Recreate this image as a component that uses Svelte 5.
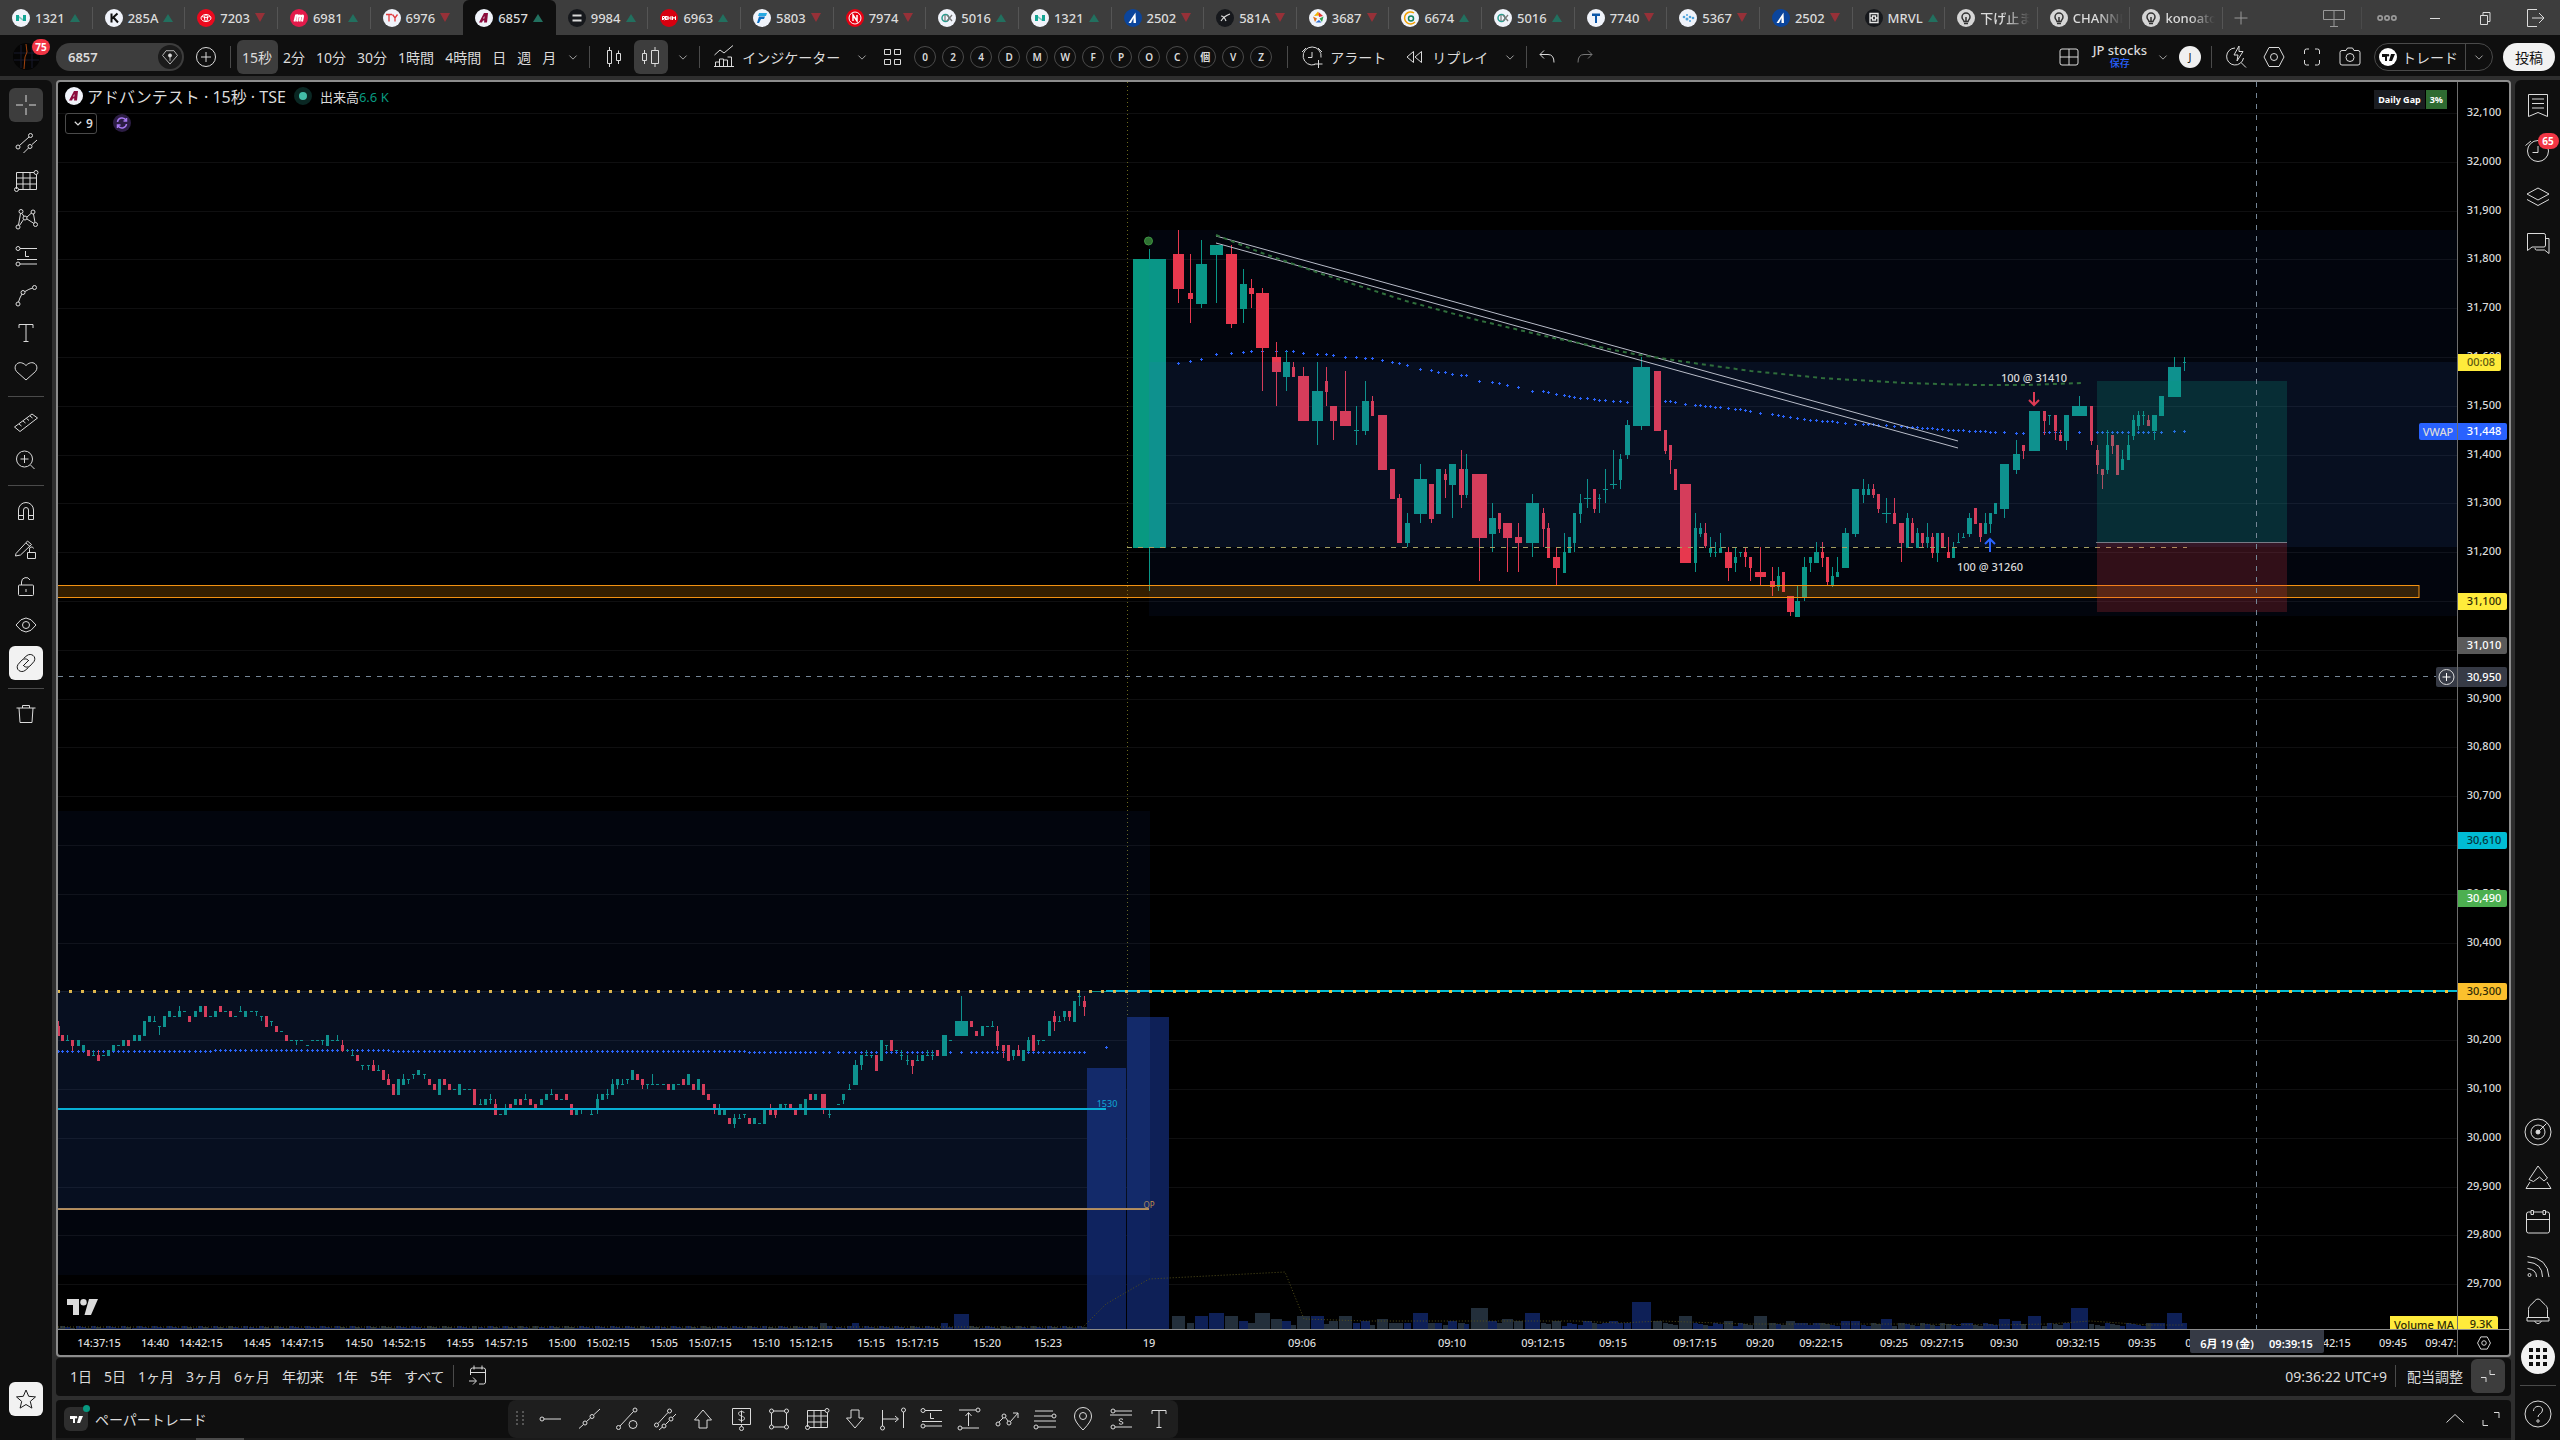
<script>
  const tabs = [
    ['1321', 'up', 'bars', '#f0f3fa', '#12a594'], ['285A', 'up', 'k', '#f0f3fa', '#111'], ['7203', 'down', 'toyota', '#eb0a1e', '#fff'],
    ['6981', 'up', 'm', '#e31b4b', '#fff'], ['6976', 'down', 'ty', '#f0f3fa', '#e03a3e'], ['6857', 'up', 'adv', '#f0f3fa', '#8b0a3c'],
    ['9984', 'up', 'eq', '#16181c', '#d8d8d8'], ['6963', 'up', 'rohm', '#d7000f', '#fff'], ['5803', 'down', 'f', '#f0f3fa', '#0b6fc2'],
    ['7974', 'down', 'n', '#e60012', '#fff'], ['5016', 'up', 'jx', '#f0f3fa', '#2a9d8f'], ['1321', 'up', 'bars', '#f0f3fa', '#12a594'],
    ['2502', 'down', 'asahi', '#0b459c', '#fff'], ['581A', 'down', 'x', '#16181c', '#ddd'], ['3687', 'down', 'star', '#f0f3fa', '#e33'],
    ['6674', 'up', 'gs', '#f0f3fa', '#12805c'], ['5016', 'up', 'jx', '#f0f3fa', '#2a9d8f'], ['7740', 'down', 't', '#f0f3fa', '#0b56a8'],
    ['5367', 'down', 'dots', '#f0f3fa', '#4fa3dc'], ['2502', 'down', 'asahi', '#0b459c', '#fff'], ['MRVL', 'up', 'mrvl', '#16181c', '#e6e6e6'],
    ['下げ止まり', '', 'idea', '#d6d6d6', '#333'], ['CHANNEL', '', 'idea', '#d6d6d6', '#333'], ['konoatos', '', 'idea', '#d6d6d6', '#333']
  ];

  const marks = {
    bars: '<path fill="C" d="M4 6h3v6H4zM11 6h3v6h-3z"/><path fill="#7fc9c0" d="m7 7 4 3v2L7 9z"/>',
    k: '<path fill="none" stroke="C" stroke-width="2" d="M6.500 4.500v9M12.500 4.500 7 9.500M8.500 8.500l4.500 5"/>',
    toyota: '<g fill="none" stroke="C"><ellipse cx="9" cy="9" rx="5" ry="3.500"/><ellipse cx="9" cy="9" rx="1.500" ry="3.500"/><path d="M5 7.500q4 2.500 8 0"/></g>',
    m: '<path fill="none" stroke="C" stroke-width="2" d="M4.500 12.500 6 6.500q2-1 2 1l-1 5M8 7.500q2.500-2 2.500 0l-1 5M10.500 7.500q3-2 2.500 0l-1 5"/>',
    ty: '<path fill="none" stroke="C" stroke-width="1.300" d="M3 5.500h6M6 5.500v7M9.500 5.500l2.500 3.500 2.500-3.500M12 9v3.500"/>',
    adv: '<path fill="C" d="M9 4h4l-1 9.500H9l.3-2H8l-1 2H4z"/><path fill="#f0f3fa" d="m9.500 7-.2 2.500H8z"/>',
    eq: '<path fill="C" d="M4.500 5.500h9v2h-9zM4.500 10.500h9v2h-9z"/>',
    rohm: '<g fill="none" stroke="C"><path d="M2.500 11V7.500h2v2h-2l2 1.500M8 7v4M11 7v4M8 9h3M12.500 11V7.500l1.500 2 1.500-2V11"/><rect x="5.500" y="7.500" width="1.500" height="3"/></g>',
    f: '<path fill="#27a9e1" d="M6 4h8l-1 3H5z"/><path fill="C" d="M6 7.500h6l-1 2.500H8l-2 4H4z"/>',
    n: '<circle cx="9" cy="9" r="6" fill="none" stroke="C"/><path fill="none" stroke="C" stroke-width="1.500" d="M7 12V6l4 6V6"/>',
    jx: '<circle cx="7.500" cy="9" r="3.500" fill="none" stroke="C" stroke-width="1.500"/><path stroke="#777" stroke-width="1.200" fill="none" d="m9 6 5 6M14 6l-5 6M7 6v6"/>',
    asahi: '<path fill="C" d="M11.500 3.500 12 14H9.500V9L7 14H4.500z"/>',
    x: '<path stroke="C" fill="none" stroke-width="1.200" d="M5 7q3 0 5 5M5 12q3-5 9-7"/>',
    star: '<path fill="#f3b300" d="M5 7 9 2.500l1.500 4z"/><path fill="#e03131" d="m9.500 3 4.500 4-4 1z"/><path fill="#2e9e4f" d="M14.500 7.500 13 13l-2.500-3.500z"/><path fill="#2f6fd0" d="M12.500 13.500H6.500l3.500-2.500z"/><path fill="#e0701b" d="M6 13 4 7.500l4 2z"/>',
    gs: '<path fill="none" stroke="#f0a000" stroke-width="1.500" d="M13 4a6 6 0 1 0 1 9"/><circle cx="10" cy="9.500" r="2.500" fill="none" stroke="C" stroke-width="1.500"/>',
    t: '<path fill="C" d="M5 4.500h8v2.500h-3v7H8V7H5z"/>',
    dots: '<g fill="C"><circle cx="5" cy="8" r="1.300"/><circle cx="8" cy="6" r="1"/><circle cx="8" cy="10" r="1.500"/><circle cx="11" cy="8" r="1.300"/><circle cx="11" cy="12" r="1"/><circle cx="14" cy="9" r="1.300"/></g>',
    mrvl: '<path fill="none" stroke="C" stroke-width="1.300" d="M5 4.500h8v9H5zM7.500 7h3v4h-3zM5 9h2M11 9h2"/>',
    idea: '<path fill="none" stroke="C" stroke-width="1.500" d="M7 12.500c0-1.500-2-2-2-4.500a4 4 0 0 1 8 0c0 2.500-2 3-2 4.500zM9 12V8M7 14.500h4"/>',
    tv: '<path fill="C" d="M3 6h5v7H6V9H3zM12 6h4l-3 7h-3zM9 6a1.300 1.300 0 1 1 0 2.600A1.300 1.300 0 0 1 9 6z"/>'
  };
  const mark = (n, c) => marks[n].replaceAll('"C"', `"${c}"`);

  const icons = {
    cross: '<path d="M14 4v7M14 17v7M4 14h7M17 14h7"/>',
    lines: '<circle cx="6" cy="18" r="2"/><circle cx="18.500" cy="6.500" r="2"/><path d="m7.500 16.500 9.500-8.500M11.500 24l5-5M20 15.500l5-4.500"/><circle cx="18" cy="17.500" r="2"/>',
    grid: '<path d="M4.500 22V5.500H22M24.500 8v14.500H6.500M4.500 11h20M4.500 17h20M11 5.500v17M18 5.500v17"/><circle cx="24" cy="5.500" r="2"/><circle cx="4.500" cy="22.500" r="2"/>',
    pattern: '<circle cx="6" cy="22" r="2"/><circle cx="9" cy="6.500" r="2"/><circle cx="13" cy="13" r="2"/><circle cx="21" cy="7" r="2"/><circle cx="23.500" cy="19.500" r="2"/><path d="m6.500 20 2-11.500M10 8.500l2 3M15 12l4.500-4M21.500 9l1.500 8.500M7.500 20.500l4-6M15 14l7 4.500"/>',
    position: '<circle cx="6" cy="5.500" r="2"/><circle cx="6" cy="21" r="2"/><path d="M8 5.500h17M8 21h17M5 16.500h20M13.500 8v5.500H17"/>',
    curve: '<circle cx="6" cy="23" r="2"/><circle cx="11" cy="11.500" r="2"/><circle cx="22.500" cy="6.500" r="2"/><path d="M6.500 21q1-4 3.500-8M13 10.500q4-2.500 7.500-3.500"/>',
    text: '<path d="M7 9V5.500h14V9M14 5.500v17M11.500 22.500h5"/>',
    heart: '<path d="M14 23 4.500 14.500C0 9 7 1.500 14 8.500c7-7 14 .5 9.500 6z"/>',
    ruler: '<path d="M2.500 19 20 6l5.500 4L8 23.500zM7 16l2.500 2M11 13l2.500 2M14.500 10.500l2.500 2M18 8l2.500 2"/>',
    zoom: '<circle cx="12.500" cy="13" r="8"/><path d="M12.500 9v8M8.500 13h8M18.500 19l4 4"/>',
    magnet: '<path d="M6.500 22.500V13a7.500 7.500 0 0 1 15 0v9.500h-5V13a2.500 2.500 0 0 0-5 0v9.500zM6.500 18.500h5M16.500 18.500h5"/>',
    pencil: '<path d="M4 18.500 15.500 6l4 3.500L8.500 20l-5 1zM14 8l4 3.500"/><path d="M15.500 17.500h8v6h-8zM17.500 17.500v-3a2 2 0 0 1 4-1"/>',
    lock: '<rect x="6.500" y="12" width="15" height="10.500" rx="1"/><path d="M9.500 12V9a4.500 4.500 0 0 1 8.500-2M14 16v3"/>',
    eye: '<path d="M4 14q10-14 20 0-10 14-20 0z"/><circle cx="14" cy="14" r="3.500"/>',
    link: '<path d="M11.500 9.500 15 6.500c4-3 10 1 7 6l-4 4.500c-2 1.500-4.500 1.500-6 0M16.500 18.500 13 21.500c-4 3-10-1-7-6l4-4.500c2-1.500 4.500-1.500 6 0M11 17l6-6"/>',
    trash: '<path d="M4.500 8h19M7 8l1 14.500h12L21 8M10.500 8V5.500h7V8"/>',
    star: '<path d="m14 5 2.700 6.300 6.800.6-5.200 4.500 1.600 6.700L14 19.500l-5.900 3.600 1.600-6.700-5.200-4.500 6.800-.6z"/>',
    plusc: '<circle cx="14" cy="14" r="9.500"/><path d="M14 9v10M9 14h10"/>',
    candle: '<path d="M8.500 7.500h4v13h-4zM10.500 4v3.500M10.500 20.500V24M17.500 10.500h4v7h-4zM19.500 7.500v3M19.500 17.500v3.500"/>',
    candle2: '<path d="M5.500 10.500h4v7h-4zM7.500 7v3.500M7.500 17.500V21M14.500 7.500h7v13h-7zM18 4v3.500M18 20.500V24"/>',
    ind: '<path d="M4 23.500h20M5.500 23v-4h4v4M9.500 19v-3h4v7M13.500 17h4v6M17.500 14h4v9M4.500 12 10 7l4 3 9-7.500"/>',
    four: '<path d="M6.500 6.500h6v5h-6zM16.500 6.500h6v5h-6zM6.500 16.500h6v5h-6zM16.500 16.500h6v5h-6z"/>',
    alarm: '<path d="M17 21.500a9 9 0 1 1 6-7M14 9v5.500h-4M4 9l4-4M20 5l4 4M20.500 17v8M16.500 21h8"/>',
    rew: '<path d="M13.500 8.500v11L7 14zM21.500 8.500v11L15 14z"/>',
    undo: '<path d="M11 7.500 7 11.500l4 4M7 11.500h8q6 0 6 8"/>',
    redo: '<path d="m17 7.500 4 4-4 4M21 11.500h-8q-6 0-6 8"/>',
    layout: '<rect x="5" y="6" width="18" height="16" rx="2"/><path d="M14 6v16M5 14h9"/><path d="M14 14h9"/>',
    flash: '<path d="M13 5a8.500 8.500 0 1 0 8.500 10M19 19.500l5 5M17 3l-5 9h4l-1 6 6-9.500h-4z"/>',
    hex: '<path d="M9 4.500h10l5 9.500-5 9.500H9L4 14z"/><circle cx="14" cy="14" r="3.500"/>',
    full: '<path d="M6.500 11V8q0-2 2-2H11M17 6h2.500q2 0 2 2v3M21.500 17v3q0 2-2 2H17M11 22H8.500q-2 0-2-2v-3"/>',
    camera: '<path d="M10 7.500 11.500 5h5L18 7.500h4q2 0 2 2V20q0 2-2 2H6q-2 0-2-2V9.500q0-2 2-2z"/><circle cx="14" cy="14.500" r="4"/>',
    present: '<path d="M3.500 6.500h21v9h-21zM14 6.500v16M10 22.500h8"/>',
    exit: '<path d="M16 5.500H6.500v17H16M18 9l5 5-5 5M11 14h12"/>',
    min: '<path d="M9 14.500h10"/>',
    restore: '<path d="M9.500 11.500h7v9h-7zM12 11.500v-3h7v9h-2.500"/>',
    dots3: '<circle cx="6" cy="14" r="2.500"/><circle cx="14" cy="14" r="2.500"/><circle cx="22" cy="14" r="2.500"/>',
    plus: '<path d="M14 7.500v13M7.500 14h13"/>',
    list: '<path d="M4.500 3.500h19v22l-9.500-4-9.500 4zM8 8h12M8 12.500h12M8 17h12"/>',
    clock: '<circle cx="14" cy="14" r="10.500"/><path d="M14 9v6.500H8.500M1.500 8.500 7 4"/>',
    layers: '<path d="m14 5 11 6-11 6-11-6zM3 16.500l11 6 11-6"/>',
    chat: '<path d="M3.500 4.500H20q1.500 0 1.500 2V16q0 2-1.500 2H8l-4.500 3.500zM21.500 9.500H25v15L20.500 21h-8q-1.500 0-1.500-2"/>',
    radar: '<circle cx="14" cy="14" r="13"/><circle cx="14" cy="14" r="7"/><circle cx="14" cy="14" r="2" fill="currentColor"/><path d="m14 14 8.500-8.500"/>',
    peak: '<path d="M5 16.500 14 3l9.500 12-3.500 3-4.500-4-6 4.500zM6 19l-4 6.500h25L23 19"/>',
    cal: '<rect x="2.500" y="4" width="23" height="21" rx="2"/><path d="M2.500 11.500h23"/><path fill="#0f0f0f" d="M7 2.500h2.500v4H7zM19 2.500h2.500v4H19z"/>',
    rss: '<circle cx="5.500" cy="22" r="1.500"/><path d="M3.500 15.500q9 1 9 8.500M3.500 9q15 1 15 15M3.500 3.500Q24 5 25 24"/>',
    bell: '<path d="M4.500 19.500v-8C4.500 7 9 6 10.500 3q3.500-4 7 0C19 6 23.500 7 23.500 11.500v8M3 19.500h22v3.500H3zM10.500 23q3.500 5.500 7 0"/>',
    help: '<circle cx="14" cy="14" r="13"/><path d="M9.500 11c0-6 9-6 9-1 0 4-4.500 3.500-4.500 7"/><circle cx="14" cy="21" r="1.200"/>',
    goto: '<path d="M6.500 13V8q0-2 2-2h11q2 0 2 2v12q0 2-2 2H15M6.500 10.500h15M10 3.500v4M18 3.500v4M5 19h7M9 15.500l3.500 3.500L9 22.500"/>',
    shrink: '<path d="M16 8v4.500h5M12 20v-4.500H7"/>',
    expand: '<path d="M17 7.500h5V13M11 20.500H6V15"/>',
    hray: '<circle cx="5" cy="14" r="2"/><path d="M7 14h17"/>',
    trend: '<circle cx="10" cy="18" r="2"/><circle cx="17" cy="11.500" r="2"/><path d="m4 23.500 4.500-4M11.500 16.500l4-3.500M18.500 10 25 4"/>',
    angle: '<circle cx="5.500" cy="22.500" r="2"/><circle cx="22" cy="5" r="2"/><circle cx="20" cy="19.500" r="4"/><path d="M7 21 20.500 6.500"/>',
    parallel: '<circle cx="5.500" cy="20" r="2"/><circle cx="18.500" cy="6" r="2"/><circle cx="13" cy="21" r="2"/><circle cx="20" cy="14" r="2"/><path d="M7 18.500 17 7.500M14.500 19.500l4-4M8 25l3.500-3M21.500 12.500 25 9"/>',
    up: '<path d="m14 5 8.500 10H18v8h-8v-8H5.500z"/>',
    down: '<path d="m14 23 8.500-10H18V5h-8v8H5.500z"/>',
    note: '<path d="M5.500 3.500h18v16h-18zM14.500 19.500v2M17.500 8c-1-2-6-2-6 .5 0 3 6 2 6 5 0 2.500-5 2.500-6 .5M14.500 5.500v12"/><circle cx="14.500" cy="23.500" r="2"/>',
    rect: '<path d="M6.500 8v12M21.500 8v12M8 6h12M8 22h12"/><circle cx="6.500" cy="6" r="2"/><circle cx="21.500" cy="6" r="2"/><circle cx="6.500" cy="22" r="2"/><circle cx="21.500" cy="22" r="2"/>',
    hrange: '<path d="M3.500 5v16M24.500 7v16M3.500 14H19M16 11l3.500 3-3.500 3"/><circle cx="3.500" cy="23" r="2"/><circle cx="24.500" cy="5" r="2"/>',
    vrange: '<path d="M4 5h17M7 23h17M13.500 21V8M10.500 11l3-3.500 3 3.500"/><circle cx="23" cy="5" r="2"/><circle cx="5" cy="23" r="2"/>',
    zig: '<circle cx="5" cy="19" r="2"/><circle cx="11" cy="11" r="2"/><circle cx="16" cy="18" r="2"/><path d="m6 17 4-4M12.500 12.500 15 16M17.500 16.500 25 8M20 8h5v5"/>',
    multi: '<path d="M4 6h18M3 11h18M3 16h22M7 22h18"/><circle cx="23" cy="11" r="2"/><circle cx="5" cy="22" r="2"/>',
    pin: '<path d="M14 25Q5 16 5.500 11a8.500 8.500 0 0 1 17 0Q23 16 14 25z"/><circle cx="14" cy="11" r="3.500"/>',
    short: '<circle cx="6" cy="6" r="2"/><circle cx="6" cy="22" r="2"/><path d="M8 6h17M8 22h17M3 10h22M16 14.500c-1-1-4-1-4 .5 0 2 4 1 4 3 0 1.500-3 1.500-4 .5"/>',
    chev: '<path d="m9 12 5 5 5-5"/>',
    chevup: '<path d="m5.500 17.500 8.500-8 8.500 8"/>',
    badge: '<path d="M9 6h10l4.500 6L14 23 4.500 12z"/><circle cx="14" cy="12" r="2" fill="currentColor"/><path d="M14 14v5"/>',
    grip: '<g fill="currentColor" stroke="none"><path d="M10 6h2v2h-2zM16 6h2v2h-2zM10 10h2v2h-2zM16 10h2v2h-2zM10 14h2v2h-2zM16 14h2v2h-2zM10 18h2v2h-2zM16 18h2v2h-2z"/></g>'
  };

  const intervals = ['15秒', '2分', '10分', '30分', '1時間', '4時間', '日', '週', '月'];
  const scripts = ['0', '2', '4', 'D', 'M', 'W', 'F', 'P', 'O', 'C', '個', 'V', 'Z'];
  const left = ['cross', 'lines', 'grid', 'pattern', 'position', 'curve', 'text', 'heart', '', 'ruler', 'zoom', '', 'magnet', 'pencil', 'lock', 'eye', 'link', '', 'trash'];
  const ranges = ['1日', '5日', '1ヶ月', '3ヶ月', '6ヶ月', '年初来', '1年', '5年', 'すべて'];
  const drawTools = ['grip', 'hray', 'trend', 'angle', 'parallel', 'up', 'note', 'rect', 'grid', 'down', 'hrange', 'position', 'vrange', 'zig', 'multi', 'pin', 'short', 'text'];

  // Left edge, width, body top, body bottom, high, low, direction, VWAP
  const morning = `1133 33 259 548 249 591 g 0,1173 11 254 289 230 303 r 363,1188 5 293 299 254 323 r 361,1196 11 264 304 240 308 g 359,1210 13 245 255 245 303 g 354,1226 11 254 324 245 328 r 353,1240 7 284 309 269 323 g 352,1249 5 288 294 279 308 r 351,1256 13 293 348 288 391 r 351,1272 9 357 372 342 406 r 351,1283 7 362 377 351 391 g 351,1292 3 367 377 362 377 r 351,1298 11 376 421 367 421 r 353,1312 11 391 421 362 445 g 354,1325 3 381 392 367 406 r 354,1330 7 406 421 406 440 r 355,1340 11 411 426 371 426 r 357,1354 5 430 431 406 445 g 357,1362 7 401 431 381 435 g 358,1371 3 401 416 396 416 r 358,1378 9 415 470 415 470 r 360,1390 5 469 499 469 499 r 362,1397 5 498 543 494 543 r 363,1405 5 523 543 513 547 g 365,1414 13 479 514 464 523 g 369,1429 5 484 519 484 523 r 370,1436 5 469 514 469 514 g 372,1444 3 474 480 469 498 r 372,1449 7 464 485 464 518 g 374,1459 5 469 495 450 508 r 375,1465 3 469 495 454 498 g 375,1472 15 474 538 474 581 r 381,1489 7 518 534 503 552 g 382,1498 3 513 529 513 533 r 383,1503 9 523 538 523 572 r 385,1515 7 537 543 523 572 r 387,1526 13 503 543 494 557 g 391,1542 3 513 529 508 547 r 391,1547 3 528 558 523 558 r 392,1553 7 557 568 547 585 r 394,1563 3 552 573 533 573 g 395,1568 3 537 553 537 553 g 396,1573 3 513 543 513 552 g 397,1579 3 503 514 494 523 g 398,1584 7 498 499 479 508 g 398,1593 3 489 509 489 513 r 399,1598 3 498 499 494 513 g 400,1603 5 489 490 469 503 g 400,1610 7 484 485 450 489 g 401,1619 3 459 480 454 489 g 401,1625 5 425 455 420 459 g 402,1633 17 367 426 357 430 g 402,1654 7 371 431 371 431 r 402,1664 3 430 451 430 454 r 401,1669 3 445 460 445 474 r 401,1674 3 469 490 469 490 r 402,1680 11 484 563 484 563 r 404,1694 3 528 563 513 572 g 405,1699 3 528 534 523 537 g 405,1704 3 533 546 523 548 r 406,1709 3 548 553 537 557 g 406,1714 3 552 553 542 557 g 407,1719 3 548 553 533 553 g 407,1725 7 552 568 547 581 r 408,1734 3 557 563 547 572 g 409,1739 3 552 553 552 557 g 409,1744 3 552 557 547 567 r 410,1749 3 557 568 557 581 r 411,1755 11 572 577 547 585 r 413,1770 5 581 587 567 596 r 414,1777 3 576 587 567 591 g 415,1782 3 572 592 572 592 r 416,1787 7 596 612 596 616 r 417,1795 5 601 617 585 617 g 418,1802 5 567 598 557 601 g 419,1809 3 557 563 557 572 g 420,1814 5 552 563 542 563 g 420,1821 3 552 558 542 567 r 421,1826 3 557 582 557 585 r 421,1831 3 576 586 567 587 g 421,1836 3 572 577 557 577 g 422,1842 7 533 568 528 568 g 423,1852 7 489 534 489 537 g 424,1862 3 489 495 479 503 g 424,1867 3 489 495 484 495 g 424,1872 3 489 495 484 498 r 424,1877 3 494 509 494 513 r 425,1882 9 513 514 498 523 g 425,1893 3 513 524 498 524 r 426,1899 5 523 543 523 562 r 426,1906 3 518 548 513 548 g 427,1911 3 523 543 518 543 r 427,1916 3 533 548 528 548 g 427,1921 3 533 543 533 548 r 428,1926 3 537 543 523 548 g 428,1931 3 537 553 533 558 r 428,1936 3 533 553 533 562 g 429,1941 3 533 548 533 548 r 429,1947 3 552 558 537 558 r 430,1952 3 547 558 542 558 g 430,1957 3 542 543 533 543 g 430,1962 3 537 538 533 538 g 430,1967 5 518 534 513 537 g 431,1974 3 508 524 508 524 r 431,1979 3 523 537 523 542 r 431,1984 3 523 534 513 534 g 431,1989 3 513 524 513 533 g 432,1994 3 503 514 503 514 g 432,2000 9 464 509 464 518 g 432,2013 7 454 470 440 474 g 433,2022 3 445 451 445 459 r 433,2029 11 411 451 411 451 g 433,2043 3 411 421 411 435 r 432,2048 3 415 416 415 425 g 432,2054 3 415 431 415 440 r 432,2059 3 435 441 430 441 r 432,2064 5 415 441 415 450 g 432,2072 15 406 416 396 416 g 432,2090 3 406 441 406 445 r 0,2096 3 450 465 445 474 r 432,2101 3 469 475 469 489 r 432,2106 3 445 470 430 474 g 432,2111 3 435 446 435 454 r 432,2116 3 445 475 445 475 r 432,2121 3 459 470 450 470 g 432,2127 3 445 460 435 460 g 432,2132 3 420 436 415 440 g 432,2137 3 415 426 411 430 g 432,2142 3 415 416 411 425 g 432,2147 3 420 426 415 426 r 432,2152 5 415 431 415 440 g 432,2159 5 396 416 396 416 g 432,2168 13 367 397 357 397 g 431,2183 3 362 363 357 371 g 431`;

  // Centre, body top, body bottom, high, low, direction, width if not 3
  const previous = `58 1026 1036 1021 1036 r,62 1035 1041 1035 1041 r,67 1040 1041 1035 1041 g,72 1040 1046 1040 1051 r,78 1040 1046 1040 1046 g,83 1045 1051 1045 1051 g,88 1050 1056 1050 1056 r,93 1055 1056 1050 1056 g,98 1055 1061 1050 1061 r,103 1055 1056 1055 1056 g,108 1050 1056 1050 1056 g,113 1045 1051 1045 1051 g,118 1045 1046 1045 1046 g,123 1040 1046 1040 1046 g,128 1040 1046 1040 1046 r,134 1035 1041 1035 1041 g,139 1035 1041 1035 1041 g,144 1021 1036 1021 1036 g,149 1016 1022 1016 1022 g,154 1021 1022 1016 1022 g,159 1026 1027 1026 1035 g,164 1016 1027 1016 1027 g,169 1011 1017 1011 1017 g,174 1016 1017 1016 1017 g,179 1011 1017 1006 1017 g,184 1011 1012 1011 1012 g,189 1016 1022 1016 1022 r,195 1011 1017 1011 1017 g,200 1006 1012 1006 1012 g,205 1006 1017 1006 1017 r,210 1016 1017 1016 1017 g,215 1011 1017 1011 1017 g,220 1006 1012 1006 1012 r,225 1011 1012 1011 1012 g,230 1011 1017 1011 1017 r,235 1016 1017 1016 1017 g,240 1011 1012 1006 1012 g,245 1011 1017 1011 1017 g,251 1011 1012 1011 1012 g,256 1011 1012 1011 1016 g,261 1016 1017 1016 1021 g,266 1016 1027 1016 1027 r,271 1021 1022 1021 1026 g,276 1026 1032 1026 1032 r,281 1031 1032 1031 1032 g,286 1035 1041 1035 1041 r,291 1040 1041 1040 1041 g,296 1040 1041 1040 1045 g,301 1040 1041 1040 1041 g,307 1045 1046 1045 1046 g,312 1040 1041 1040 1041 g,317 1040 1041 1040 1041 g,322 1040 1041 1040 1045 g,327 1035 1046 1035 1046 g,332 1040 1041 1040 1041 g,337 1040 1041 1035 1041 g,342 1045 1051 1040 1052 r,347 1050 1051 1050 1051 g,352 1055 1056 1050 1056 g,357 1055 1061 1055 1061 r,362 1065 1066 1065 1070 g,368 1065 1066 1065 1070 g,373 1065 1071 1060 1071 r,378 1070 1071 1065 1071 g,383 1070 1080 1070 1080 r,388 1079 1085 1074 1085 r,393 1084 1095 1084 1095 r,398 1079 1095 1079 1095 g,403 1079 1085 1074 1085 g,408 1079 1080 1079 1084 g,413 1074 1075 1074 1079 g,418 1070 1075 1070 1075 g,424 1074 1075 1074 1079 g,429 1079 1085 1079 1085 r,434 1084 1090 1084 1090 r,439 1079 1095 1079 1095 g,444 1079 1085 1079 1085 r,449 1084 1090 1084 1090 r,454 1089 1090 1089 1090 g,459 1084 1095 1084 1095 g,464 1089 1090 1089 1090 g,469 1089 1090 1089 1090 g,474 1089 1105 1089 1105 r,480 1104 1105 1099 1105 g,485 1099 1105 1099 1105 g,490 1099 1100 1094 1104 g,495 1104 1115 1099 1115 r,500 1114 1115 1114 1115 g,505 1109 1115 1104 1115 g,510 1104 1110 1104 1110 r,515 1099 1105 1099 1105 g,520 1099 1105 1099 1105 r,525 1099 1100 1094 1100 g,530 1099 1105 1099 1105 r,535 1104 1110 1104 1110 r,541 1099 1105 1099 1105 g,546 1094 1100 1094 1100 g,551 1094 1095 1089 1095 g,556 1094 1100 1094 1100 r,561 1099 1100 1099 1100 g,566 1094 1100 1094 1100 r,571 1104 1115 1104 1115 r,576 1109 1115 1109 1115 g,581 1109 1110 1109 1114 g,586 1109 1110 1109 1110 g,591 1114 1115 1109 1115 g,597 1099 1110 1094 1114 g,602 1094 1100 1094 1100 g,607 1094 1095 1089 1099 g,612 1084 1095 1079 1095 g,617 1079 1085 1079 1089 g,622 1084 1085 1079 1085 g,627 1079 1080 1079 1084 g,632 1070 1080 1070 1080 g,637 1074 1080 1074 1080 r,642 1079 1085 1079 1089 r,647 1084 1085 1084 1089 g,652 1084 1085 1074 1085 g,657 1084 1085 1084 1085 g,663 1084 1085 1084 1085 g,668 1084 1090 1084 1090 r,673 1084 1090 1084 1090 g,678 1084 1085 1084 1085 g,683 1079 1085 1079 1085 r,688 1074 1085 1074 1085 g,693 1084 1090 1084 1090 r,698 1079 1090 1079 1090 g,703 1084 1095 1084 1095 r,708 1094 1100 1094 1100 r,714 1104 1110 1104 1114 r,719 1109 1115 1104 1115 g,724 1109 1115 1109 1115 g,729 1118 1124 1118 1124 r,734 1118 1124 1114 1128 g,739 1118 1119 1114 1119 g,744 1114 1115 1114 1118 g,749 1118 1124 1118 1124 r,754 1118 1124 1118 1124 g,759 1123 1124 1123 1124 g,764 1109 1124 1109 1124 g,770 1109 1115 1104 1115 r,775 1109 1115 1109 1118 r,780 1104 1110 1104 1110 g,785 1104 1105 1104 1109 g,790 1104 1110 1104 1110 r,795 1109 1115 1109 1115 r,800 1104 1110 1104 1110 g,805 1099 1115 1099 1115 g,810 1094 1100 1094 1100 r,815 1094 1100 1094 1100 g,823 1094 1110 1094 1114 r 5,829 1114 1115 1110 1118 g,838 1104 1105 1104 1105 g,843 1094 1100 1094 1104 g,849 1089 1090 1084 1090 g,855 1065 1085 1060 1085 g 5,861 1055 1065 1055 1070 g,866 1055 1056 1050 1056 g,871 1055 1056 1055 1058 g,876 1055 1071 1055 1071 r,881 1040 1061 1040 1061 g,886 1045 1046 1045 1050 g,891 1040 1051 1040 1051 r,896 1050 1051 1050 1051 g,901 1055 1056 1050 1060 g,907 1060 1061 1055 1065 g,912 1060 1066 1060 1074 r,917 1060 1061 1055 1061 g,922 1055 1061 1055 1061 g,927 1055 1056 1050 1056 g,932 1055 1056 1050 1060 g,937 1050 1056 1050 1056 r,944 1035 1056 1035 1056 g 5,950 1040 1041 1040 1041 g,961 1021 1036 996 1036 g 13,971 1021 1027 1021 1027 r,976 1031 1036 1031 1036 r,982 1026 1036 1026 1036 g,987 1026 1027 1026 1027 g,992 1026 1027 1021 1027 g,997 1031 1046 1026 1050 r,1003 1045 1051 1045 1058 r,1008 1045 1061 1045 1061 r,1013 1050 1056 1050 1060 g,1018 1050 1056 1045 1056 r,1023 1050 1061 1050 1061 g,1028 1040 1051 1037 1051 g,1033 1035 1051 1035 1051 r,1038 1040 1041 1040 1045 g,1043 1040 1041 1040 1041 g,1049 1021 1036 1021 1036 g,1054 1016 1022 1011 1031 r,1059 1021 1022 1016 1022 g,1064 1011 1017 1011 1021 g,1069 1011 1017 1011 1021 r,1074 1001 1022 1001 1022 g,1079 996 997 991 1006 g,1084 1001 1007 996 1016 r`;

  const volByWidth = { 5: 6, 7: 8, 9: 10, 11: 13, 13: 16, 15: 21, 17: 27 };
  const oldVwap = (x) => (x < 215 ? 1051 : x < 391 ? 1050 : x < 748 ? 1051 : 1052);
  const candles = [
    ...morning.split(',').map((s, i) => {
      const p = s.split(' ');
      const [x, w, top, bot, hi, lo] = p.map(Number);
      return { x, w, top, bot, hi, lo, up: p[6] === 'g', vwap: +p[7], vol: volByWidth[w] ?? 3 + ((i * 7) % 4) };
    }),
    ...previous.split(',').map((s, i) => {
      const p = s.split(' ');
      const [c, top, bot, hi, lo] = p.map(Number);
      const w = +(p[6] ?? 3);
      return { x: c - (w - 1) / 2, w, top, bot, hi, lo, up: p[5] === 'g', vwap: oldVwap(c), vol: w === 13 ? 15 : w === 5 ? 6 : 1 + ((i * 5) % 3) };
    })
  ];
  const mid = (c) => c.x + Math.floor(c.w / 2);

  const yOf = (p) => Math.round(113 + (32100 - p) * 0.488);
  const prices = Array.from({ length: 25 }, (_, i) => 32100 - i * 100);
  const fmt = (p) => p.toLocaleString('en-US');
  const tags = [
    { y: 354, h: 17, w: 43, t: '00:08', bg: '#ffeb3b', fg: '#5c5610' },
    { y: 423, h: 17, w: 49, t: '31,448', bg: '#2962ff', fg: '#fff' },
    { y: 593, h: 17, w: 49, t: '31,100', bg: '#ffeb3b', fg: '#2e2a05' },
    { y: 637, h: 17, w: 49, t: '31,010', bg: '#5a5a5a', fg: '#fff' },
    { y: 667, h: 20, w: 49, t: '30,950', bg: '#363a45', fg: '#fff' },
    { y: 832, h: 17, w: 49, t: '30,610', bg: '#00bcd4', fg: '#05343a' },
    { y: 890, h: 17, w: 49, t: '30,490', bg: '#4caf50', fg: '#fff' },
    { y: 983, h: 17, w: 49, t: '30,300', bg: '#fbc02d', fg: '#2e2a05' },
    { y: 1316, h: 17, w: 40, t: '9.3K', bg: '#ffeb3b', fg: '#2e2a05' }
  ];
  const times = [[99, '14:37:15'], [155, '14:40'], [201, '14:42:15'], [257, '14:45'], [302, '14:47:15'], [359, '14:50'], [404, '14:52:15'], [460, '14:55'], [506, '14:57:15'], [562, '15:00'], [608, '15:02:15'], [664, '15:05'], [710, '15:07:15'], [766, '15:10'], [811, '15:12:15'], [871, '15:15'], [917, '15:17:15'], [987, '15:20'], [1048, '15:23'], [1149, '19'], [1302, '09:06'], [1452, '09:10'], [1543, '09:12:15'], [1613, '09:15'], [1695, '09:17:15'], [1760, '09:20'], [1821, '09:22:15'], [1894, '09:25'], [1942, '09:27:15'], [2004, '09:30'], [2078, '09:32:15'], [2142, '09:35'], [2207, '09:37:15'], [2329, '09:42:15'], [2393, '09:45'], [2447, '09:47:15']];
</script>

{#snippet icon(name)}
  <svg class="ic" viewBox="0 0 28 28" aria-hidden="true">{@html icons[name]}</svg>
{/snippet}

{#snippet logo(name, bg, fg)}
  <svg class="logo" viewBox="0 0 18 18" aria-hidden="true"><circle cx="9" cy="9" r="9" fill={bg} />{@html mark(name, fg)}</svg>
{/snippet}

<div class="app">
  <header class="tabs">
    <nav>
      {#each tabs as [name, dir, m, bg, fg], i}
        <button class="tab" class:active={i === 5} class:bare={i === 4 || i === 5}>
          {@render logo(m, bg, fg)}
          <span class="name" class:fade={!dir}>{name}</span>
          {#if dir}<i class={dir}></i>{/if}
        </button>
      {/each}
    </nav>
    <div class="window">
      <button class="add" aria-label="新しいタブ">{@render icon('plus')}</button>
      <button class="dim" aria-label="画面共有">{@render icon('present')}</button>
      <span class="vline"></span>
      <button class="dim small" aria-label="メニュー">{@render icon('dots3')}</button>
      <button aria-label="最小化">{@render icon('min')}</button>
      <button aria-label="元に戻す">{@render icon('restore')}</button>
      <button aria-label="終了">{@render icon('exit')}</button>
    </div>
  </header>

  <div class="toolbar">
    <button class="avatar" aria-label="アカウント">
      <svg viewBox="0 0 27 27"><circle cx="13.5" cy="13.5" r="13.5" fill="#050505" /><path d="M1 10h25M1 17h25M8 2v23M19 2v23" stroke="#191a2c" /><path d="m11 26 1-12 2-5-1-8" stroke="#a3430d" fill="none" /></svg>
      <b>75</b>
    </button>
    <button class="search"><b>6857</b><span>{@render icon('badge')}</span></button>
    <button class="tool" aria-label="比較">{@render icon('plusc')}</button>
    <span class="sep"></span>
    {#each intervals as t, i}
      <button class="text" class:on={i === 0}>{t}</button>
    {/each}
    <button class="chev" aria-label="時間足">{@render icon('chev')}</button>
    <span class="sep"></span>
    <button class="tool wide" aria-label="ローソク足">{@render icon('candle')}</button>
    <button class="tool wide on" aria-label="出来高ローソク">{@render icon('candle2')}</button>
    <button class="chev" aria-label="チャートの種類">{@render icon('chev')}</button>
    <span class="sep"></span>
    <button class="labelled">{@render icon('ind')}インジケーター</button>
    <button class="chev far" aria-label="お気に入り">{@render icon('chev')}</button>
    <button class="tool next" aria-label="テンプレート">{@render icon('four')}</button>
    <div class="scripts">
      {#each scripts as s}<button>{s}</button>{/each}
    </div>
    <span class="sep"></span>
    <button class="labelled">{@render icon('alarm')}アラート</button>
    <button class="labelled next">{@render icon('rew')}リプレイ</button>
    <button class="chev far" aria-label="リプレイ設定">{@render icon('chev')}</button>
    <span class="sep"></span>
    <button class="tool" aria-label="元に戻す">{@render icon('undo')}</button>
    <button class="tool next off" aria-label="やり直す">{@render icon('redo')}</button>

    <div class="right">
      <button class="tool" aria-label="レイアウト">{@render icon('layout')}</button>
      <button class="save"><span>JP stocks</span><small>保存</small></button>
      <button class="chev flush" aria-label="レイアウト管理">{@render icon('chev')}</button>
      <button class="user">J</button>
      <span class="vline"></span>
      <button class="tool" aria-label="クイック検索">{@render icon('flash')}</button>
      <button class="tool" aria-label="設定">{@render icon('hex')}</button>
      <button class="tool" aria-label="全画面">{@render icon('full')}</button>
      <button class="tool" aria-label="スナップショット">{@render icon('camera')}</button>
      <div class="trade">
        <button>{@render logo('tv', '#fff', '#0f0f0f')}トレード</button>
        <button class="drop" aria-label="トレードメニュー">{@render icon('chev')}</button>
      </div>
      <button class="post">投稿</button>
    </div>
  </div>

  <div class="body">
    <aside class="rail">
      {#each left as n, i}
        {#if n}
          <button class:on={i === 0} class:lit={n === 'link'} aria-label={n}>{@render icon(n)}</button>
        {:else}
          <hr />
        {/if}
      {/each}
      <button class="lit last" aria-label="お気に入りツール">{@render icon('star')}</button>
    </aside>

    <main>
      <section class="chart">
        <div class="plot">
          <svg class="canvas" role="img" aria-label="6857 15秒足チャート">
            <g transform="translate(-58 -82)">
              {#each prices as p}<rect x="58" y={yOf(p)} width="2400" height="1" fill="#0f0f10" />{/each}
              <g fill="none" stroke="#6d6a1c" stroke-dasharray="1 3"><path d="M1127.500 82V1329" /></g>

              {#each candles as c}
                {#if c.w !== 33}<rect x={c.x - 1} y={1329 - c.vol} width={c.w + 2} height={c.vol} fill={c.up ? '#0e2057' : '#232f3b'} />{/if}
              {/each}
              <path fill="#0e2057" d="M1087 1068h39v261h-39zM1127 1017h42v312h-42z" />
              <path fill="none" stroke="#55501b" stroke-dasharray="1 2" d="M58 1327H1083L1106 1304 1149 1279 1285 1272 1304 1319 1366 1321H1577L1619 1323 1661 1321 1745 1324H1913L1998 1325 2048 1324 2090 1321 2149 1325H2183" />

              <g fill="#2962ff">
                {#each candles as c}
                  {#if c.vwap}<path d="M{mid(c) - 1} {c.vwap}h1v-1h1v1h1v1h-1v1h-1v-1h-1z" />{/if}
                {/each}
                <path d="M1105 1047h1v-1h1v1h1v1h-1v1h-1v-1h-1z" />
              </g>
              {#each candles as c}
                <g fill={c.up ? '#089981' : '#f23645'}>
                  <rect x={mid(c)} y={c.hi} width="1" height={c.lo - c.hi} />
                  <rect x={c.x} y={c.top} width={c.w} height={c.bot - c.top} />
                </g>
              {/each}

              <path fill="#00bcd4" d="M58 1108h1048v2H58zM1106 990h1351v2H1106z" />
              <path fill="#089981" d="M1089 991h17v1h-17z" />
              <path stroke="#f5c23c" stroke-width="3" stroke-dasharray="3 9" fill="none" d="M57 991.500H2457" />
              <path fill="#bf9150" d="M58 1208h1091v2H58z" />
              <text x="1107" y="1107" class="tiny">1530</text>
              <text x="1149" y="1208" class="mini">OP</text>

              <rect x="1149" y="230" width="1308" height="386" fill="#2962ff" opacity=".05" />
              <rect x="1149" y="362" width="1308" height="185" fill="#3a70d0" opacity=".1" />
              <rect x="58" y="811" width="1092" height="464" fill="#2962ff" opacity=".05" />
              <rect x="58" y="991" width="1092" height="218" fill="#3a70d0" opacity=".1" />

              <path fill="none" stroke="#a39f62" stroke-dasharray="5 6" d="M1127 547.500H2187" />
              <rect x="57" y="585.500" width="2362" height="12" fill="#ff9800" fill-opacity=".2" stroke="#f39212" />

              <g fill="none" stroke="#b9bdc9" stroke-width="1">
                <path d="M1216 236 1958 441M1216 243 1958 448" />
              </g>
              <path fill="none" stroke="#2f6e3b" stroke-width="2" stroke-dasharray="4 4" d="M1216 235 1262 253 1322 274 1406 301 1477 320 1549 337 1634 354 1686 362 1751 371 1822 378 1905 383 1974 385H2027L2081 383" />
              <circle cx="1148.500" cy="241" r="4" fill="#2e7031" stroke="#3d9142" />

              <rect x="2097" y="381" width="190" height="161" fill="#089981" opacity=".22" />
              <rect x="2097" y="543" width="190" height="69" fill="#f23645" opacity=".2" />
              <path fill="#787b86" d="M2096 542h191v1h-191z" />

              <text x="2034" y="382">100 @ 31410</text>
              <text x="1990" y="571">100 @ 31260</text>
              <path fill="none" stroke="#de3a54" stroke-width="2" d="M2034 392v12M2029 400l5 5 5-5" />
              <path fill="none" stroke="#2962ff" stroke-width="2" d="M1990 552v-12M1985 544l5-5 5 5" />

              <g fill="none" stroke="#758696" stroke-dasharray="5 6">
                <path d="M2256.500 82V1329M58 676.500H2436" />
              </g>
              <path fill="#363a45" d="M2438 667h19v20h-19q-2 0-2-2v-16q0-2 2-2z" />
              <path fill="none" stroke="#fff" d="M2446.500 673v8M2442.500 677h8" /><circle cx="2446.500" cy="677" r="7.500" fill="none" stroke="#ddd" />
              <path fill="#2962ff" d="M2421 423h36v17h-36q-2 0-2-2v-13q0-2 2-2z" />
              <text x="2438" y="436">VWAP</text>
              <rect x="2390" y="1316" width="67" height="17" fill="#ffeb3b" />
              <text x="2424" y="1329" class="dark">Volume MA</text>
            </g>
          </svg>
          <div class="legend">
            <p>
              {@render logo('adv', '#f0f3fa', '#8b0a3c')}
              <span class="title">アドバンテスト · 15秒 · TSE</span>
              <i class="status"></i>
              <span class="vol">出来高<em>6.6 K</em></span>
            </p>
            <p>
              <button class="fold">{@render icon('chev')}9</button>
              <svg class="sync" viewBox="0 0 18 18"><circle cx="9" cy="9" r="9" fill="#2c1d44" /><path d="M4.500 8a4.500 4.500 0 0 1 8.500-1.500M13.500 10A4.500 4.500 0 0 1 5 11.500M13.500 4v3h-3M4.500 14v-3h3" fill="none" stroke="#a678f0" stroke-width="1.500" /></svg>
            </p>
          </div>
          <div class="gap"><b>Daily Gap</b><b class="pct">3%</b></div>
          <svg class="brand" viewBox="0 0 31 16"><path d="M0 0h12v16H6V6H0zM22 0h9l-7 16h-6.500z" /><circle cx="16.500" cy="3.200" r="3.200" /></svg>
        </div>

        <svg class="prices">
          <g transform="translate(-2458 -82)">
            {#each prices as p}<text x="2484" y={yOf(p) + 3}>{fmt(p)}</text>{/each}
            {#each tags as t}
              <rect x="2456" y={t.y} width={t.w + 2} height={t.h} rx="2" fill={t.bg} />
              <text x={t.w === 49 ? 2484 : 2481} y={t.y + Math.floor(t.h / 2) + 4} style:fill={t.fg}>{t.t}</text>
            {/each}
          </g>
        </svg>

        <svg class="times">
          <g transform="translate(-58 -1330)">
            {#each times as [x, t]}<text {x} y="1347">{t}</text>{/each}
            <path fill="#363a45" d="M2190 1330h134v21q0 2-2 2h-130q-2 0-2-2z" />
            <text x="2227" y="1348" class="hot">6月 19 (金)</text>
            <text x="2291" y="1348" class="hot">09:39:15</text>
          </g>
        </svg>
        <button class="corner" aria-label="スケール設定">{@render icon('hex')}</button>
      </section>

      <section class="range">
        {#each ranges as r}<button>{r}</button>{/each}
        <span class="vline"></span>
        <button class="goto" aria-label="日付へ移動">{@render icon('goto')}</button>
        <span class="spacer"></span>
        <button>09:36:22 UTC+9</button>
        <span class="vline"></span>
        <button class="adj">配当調整</button>
        <button class="shrink" aria-label="折りたたむ">{@render icon('shrink')}</button>
      </section>

      <section class="panel">
        <button class="paper">
          <span class="chip">{@render logo('tv', 'none', '#fff')}<i></i></span>ペーパートレード
        </button>
        <div class="draw">
          {#each drawTools as d}<button class:grip={d === 'grip'} aria-label={d}>{@render icon(d)}</button>{/each}
        </div>
        <div class="ends">
          <button aria-label="開く">{@render icon('chevup')}</button>
          <button aria-label="最大化">{@render icon('expand')}</button>
        </div>
      </section>
      <div class="strip"><i></i></div>
    </main>

    <aside class="side">
      <div class="stack">
        <button aria-label="ウォッチリスト">{@render icon('list')}</button>
        <button aria-label="アラート">{@render icon('clock')}<b>65</b></button>
        <button aria-label="レイヤー">{@render icon('layers')}</button>
        <button aria-label="チャット">{@render icon('chat')}</button>
      </div>
      <div class="stack lower">
        <button aria-label="スクリーナー">{@render icon('radar')}</button>
        <button aria-label="パイン">{@render icon('peak')}</button>
        <button aria-label="カレンダー">{@render icon('cal')}</button>
        <button aria-label="ニュース">{@render icon('rss')}</button>
        <button aria-label="通知">{@render icon('bell')}</button>
        <button class="apps" aria-label="製品">
          <svg viewBox="0 0 34 34"><circle cx="17" cy="17" r="17" fill="#f2f2f2" /><path fill="#0f0f0f" d="M8 8h4v4H8zM15 8h4v4h-4zM22 8h4v4h-4zM8 15h4v4H8zM15 15h4v4h-4zM22 15h4v4h-4zM8 22h4v4H8zM15 22h4v4h-4zM22 22h4v4h-4z" /></svg>
        </button>
        <hr />
        <button aria-label="ヘルプ">{@render icon('help')}</button>
      </div>
    </aside>
  </div>
</div>

<style>
  :global(body) { background: #2e2e2e; }
  .app { display: flex; flex-direction: column; height: 100vh; overflow: hidden; background: #2e2e2e; color: #dbdbdb; font-family: "Noto Sans", "Noto Sans CJK JP", sans-serif; font-size: 14px; }
  button { display: flex; align-items: center; justify-content: center; padding: 0; border: 0; background: none; color: inherit; font: inherit; white-space: nowrap; flex: none; }
  p { margin: 0; }
  .ic { width: 28px; height: 28px; flex: none; fill: none; stroke: currentColor; stroke-width: 1; display: block; }
  .logo { width: 18px; height: 18px; flex: none; display: block; }
  .vline { width: 1px; height: 22px; background: #4a4a4a; flex: none; }
  .spacer { flex: 1; }
  hr { width: 36px; height: 1px; border: 0; margin: 4px 0; background: #4a4a4a; flex: none; }

  .tabs { display: flex; height: 35px; background: #3d3d3d; flex: none; font-size: 13px; }
  nav { display: flex; flex: 1; min-width: 0; }
  .tab { position: relative; flex: 1; min-width: 0; justify-content: flex-start; gap: 5px; padding-left: 12px; overflow: hidden; font-weight: 500; }
  .tab::after { content: ""; position: absolute; right: 0; top: 7px; width: 1px; height: 22px; background: #555; }
  .tab.bare::after { display: none; }
  .tab.active { background: #0f0f0f; border-radius: 6px 6px 0 0; }
  .name.fade { width: 50px; overflow: hidden; text-align: left; mask-image: linear-gradient(90deg, #000 50%, transparent); }
  .up, .down { border: 5px solid transparent; }
  .up { border-bottom: 8px solid #22705f; border-top: 0; }
  .down { border-top: 9px solid #963138; border-bottom: 0; }
  .window { display: flex; align-items: center; width: 337px; gap: 22px; }
  .window .add { margin: 0 43px 0 4px; color: #999; }
  .window .dim { color: #999; }
  .window .small .ic { width: 24px; stroke-width: 2; }
  .window .vline { margin: 0 -9px; }

  .toolbar { display: flex; align-items: center; height: 41px; padding: 2px 5px 0 13px; box-sizing: border-box; background: #0f0f0f; flex: none; }
  .avatar { position: relative; width: 27px; height: 27px; margin-right: 16px; }
  .avatar svg { width: 27px; height: 27px; }
  .avatar b { position: absolute; left: 19px; top: -4px; width: 18px; height: 16px; border-radius: 8px; background: #f23645; color: #fff; font-size: 10px; line-height: 16px; }
  .search { width: 128px; height: 28px; justify-content: space-between; padding: 0 2px 0 12px; box-sizing: border-box; border-radius: 14px; background: #3d3d3d; font-size: 13px; margin-right: 8px; }
  .search b { font-weight: 600; }
  .search span { display: flex; align-items: center; justify-content: center; width: 24px; height: 24px; border-radius: 12px; background: #1b1b1b; }
  .search .ic { width: 22px; height: 22px; }
  .tool { width: 28px; height: 34px; border-radius: 6px; }
  .tool.wide { width: 34px; margin-right: 4px; }
  .on { background: #3d3d3d; }
  .tool.next, .labelled.next { margin-left: 10px; }
  .tool.off { color: #777; }
  .sep { width: 1px; height: 22px; margin: 0 6px 0 10px; background: #4a4a4a; flex: none; }
  .text { height: 34px; padding: 0 6px 0 5px; border-radius: 6px; }
  .chev { width: 12px; margin-left: 5px; }
  .chev.far { margin-left: 16px; }
  .chev.flush { margin-left: 0; }
  .chev .ic { width: 20px; height: 20px; margin: 0 -4px; }
  .labelled { gap: 4px; padding-left: 4px; }
  .scripts { display: flex; gap: 6px; margin: 0 5px 0 8px; }
  .scripts button { width: 22px; height: 22px; box-sizing: border-box; border: 1px solid #4a4a4a; border-radius: 11px; font-size: 10px; font-weight: 600; }
  .right { display: flex; align-items: center; gap: 10px; margin-left: auto; }
  .save { flex-direction: column; font-size: 13px; line-height: 13px; font-weight: 500; }
  .save small { font-size: 10px; line-height: 13px; color: #2962ff; }
  .user { width: 22px; height: 22px; border-radius: 11px; background: #f0f0f0; color: #222; font-size: 11px; }
  .trade { display: flex; height: 28px; box-sizing: border-box; border: 1px solid #4a4a4a; border-radius: 14px; }
  .trade button { gap: 5px; padding: 0 7px 0 4px; }
  .trade .drop { width: 27px; padding: 0; border-left: 1px solid #4a4a4a; }
  .trade .drop .ic { width: 20px; }
  .post { width: 52px; height: 28px; border-radius: 14px; background: #f2f2f2; color: #0f0f0f; }

  .body { display: flex; flex: 1; min-height: 0; padding-top: 4px; gap: 4px; }
  .rail { display: flex; flex-direction: column; align-items: center; gap: 4px; width: 52px; box-sizing: border-box; padding: 8px 0 24px; background: #0f0f0f; border-radius: 0 6px 0 0; flex: none; }
  .rail button { width: 34px; height: 34px; border-radius: 6px; }
  .rail .lit { background: #f2f2f2; color: #1a1a1a; }
  .rail .last { margin-top: auto; }
  main { display: flex; flex-direction: column; flex: 1; min-width: 0; }

  .chart { position: relative; display: grid; grid-template: minmax(0, 1fr) 26px / minmax(0, 1fr) 52px; flex: 1; min-height: 0; border: 2px solid #8c8c8c; border-radius: 4px; background: #000; overflow: hidden; }
  .plot { position: relative; overflow: hidden; }
  .canvas { position: absolute; width: 100%; height: 100%; }
  .chart svg text { font-size: 11px; text-anchor: middle; fill: #dbdbdb; font-weight: 500; }
  .chart svg text.tiny { font-size: 9px; fill: #0bb5d6; font-weight: 400; }
  .chart svg text.mini { font-size: 8px; fill: #c08f4c; font-weight: 400; }
  .chart svg text.dark { fill: #2e2a05; }
  .chart svg text.hot { fill: #fff; font-weight: 600; }
  .prices { width: 100%; height: 100%; box-sizing: border-box; border-left: 1px solid #6e6e6e; }
  .times { width: 100%; height: 100%; box-sizing: border-box; border-top: 1px solid #8c8c8c; }
  .corner { border-left: 1px solid #6e6e6e; border-top: 1px solid #8c8c8c; }
  .corner .ic { width: 18px; height: 18px; stroke-width: 1.500; }
  .legend { position: absolute; left: 7px; top: 2px; }
  .legend p { display: flex; align-items: center; height: 24px; }
  .legend .title { margin: 0 8px 0 4px; font-size: 16px; }
  .status { width: 8px; height: 8px; border: 5px solid #0a2723; border-radius: 9px; background: #42bda8; }
  .vol { margin-left: 8px; font-size: 13px; }
  .vol em { color: #089981; font-style: normal; }
  .legend p:nth-child(2) { height: 30px; }
  .fold { width: 32px; height: 21px; box-sizing: border-box; border: 1px solid #4a4a4a; border-radius: 3px; font-size: 12px; font-weight: 600; }
  .fold .ic { width: 18px; height: 18px; margin-right: -1px; stroke-width: 2; }
  .sync { width: 18px; height: 18px; margin-left: 16px; }
  .gap { position: absolute; right: 10px; top: 8px; display: flex; font-size: 9px; line-height: 19px; color: #fff; }
  .gap b { padding: 0 4px; background: #1a1c20; }
  .gap .pct { margin-left: 1px; background: #2e6b31; }
  .brand { position: absolute; left: 9px; bottom: 14px; width: 31px; height: 16px; fill: #dbdbdb; }

  .range { display: flex; align-items: center; height: 38px; margin-top: 1px; padding: 0 6px 2px 8px; box-sizing: border-box; background: #0f0f0f; border-radius: 4px; flex: none; }
  .range button { padding: 0 6px; }
  .range .goto { padding: 0 8px; }
  .range .shrink { width: 34px; height: 34px; padding: 0; border-radius: 6px; background: #3d3d3d; margin-left: 2px; }
  .range .adj { padding-left: 9px; }
  .range .vline { margin: 0 2px; }

  .panel { position: relative; display: flex; align-items: center; height: 38px; margin-top: 4px; padding: 0 6px 0 8px; background: #0f0f0f; border-radius: 4px 4px 0 0; flex: none; }
  .paper { gap: 7px; }
  .chip { position: relative; display: flex; align-items: center; justify-content: center; width: 24px; height: 24px; border-radius: 6px; background: #2e2e2e; }
  .chip i { position: absolute; right: -2px; top: -2px; width: 7px; height: 7px; border-radius: 4px; background: #089981; }
  .draw { position: absolute; left: 452px; top: 0; display: flex; align-items: center; height: 38px; border-radius: 8px; background: #1e1e1e; }
  .draw button { width: 38px; }
  .draw .grip { width: 24px; color: #555; }
  .ends { display: flex; gap: 8px; margin-left: auto; }
  .strip { height: 2px; background: #1a1a1a; flex: none; }
  .strip i { display: block; width: 48px; height: 2px; margin-left: 140px; background: #4a4a4a; }

  .side { display: flex; flex-direction: column; justify-content: space-between; width: 45px; box-sizing: border-box; padding: 8px 0 9px; background: #0f0f0f; border-radius: 6px 0 0 0; flex: none; }
  .stack { display: flex; flex-direction: column; align-items: center; gap: 12px; }
  .stack.lower { gap: 11px; }
  .side button { position: relative; width: 34px; height: 34px; }
  .side .apps svg { width: 34px; height: 34px; }
  .side b { position: absolute; left: 17px; top: -1px; width: 21px; height: 16px; border-radius: 8px; background: #f23645; color: #fff; font-size: 10px; line-height: 16px; }
  .side hr { margin: 0; }
</style>
